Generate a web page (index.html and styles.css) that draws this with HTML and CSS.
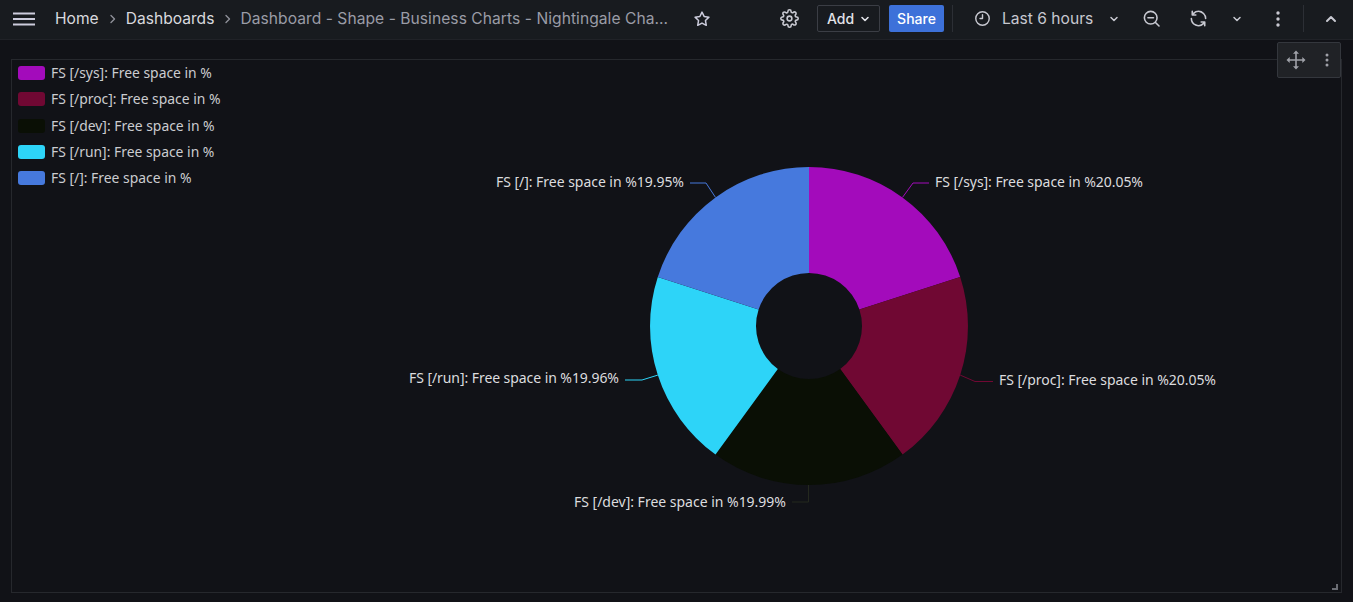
FILE: index.html
```html
<!DOCTYPE html>
<html lang="en">
<head>
<meta charset="utf-8">
<title>Dashboard - Shape - Business Charts - Nightingale Chart</title>
<link rel="stylesheet" href="styles.css">
</head>
<body>
<header class="topbar">
  <button class="btn-icon menu-btn" aria-label="Open menu">
    <svg width="22" height="14" viewBox="0 0 22 14"><path d="M0 1.5h22M0 7h22M0 12.5h22" stroke="currentColor" stroke-width="2"/></svg>
  </button>
  <nav class="crumbs">
    <a class="crumb">Home</a>
    <svg class="sep" width="6" height="10" viewBox="0 0 6 10"><path d="M1 1.5l3.5 3.5L1 8.5" fill="none" stroke="currentColor" stroke-width="1.4" stroke-linecap="round" stroke-linejoin="round"/></svg>
    <a class="crumb">Dashboards</a>
    <svg class="sep" width="6" height="10" viewBox="0 0 6 10"><path d="M1 1.5l3.5 3.5L1 8.5" fill="none" stroke="currentColor" stroke-width="1.4" stroke-linecap="round" stroke-linejoin="round"/></svg>
    <span class="crumb current">Dashboard - Shape - Business Charts - Nightingale Cha...</span>
  </nav>
  <button class="btn-icon star-btn" aria-label="Mark as favorite">
    <svg width="18" height="18" viewBox="0 0 24 24"><path d="M12 2.8l2.85 5.8 6.4.93-4.63 4.5 1.1 6.370L12 17.4l-5.72 3.02 1.1-6.37-4.63-4.5 6.4-.93z" fill="none" stroke="currentColor" stroke-width="2" stroke-linejoin="round"/></svg>
  </button>

  <div class="actions">
    <button class="btn-icon gear-btn" aria-label="Settings">
      <svg width="19" height="19" viewBox="0 0 24 24" fill="none" stroke="currentColor" stroke-width="2" stroke-linecap="round" stroke-linejoin="round"><circle cx="12" cy="12" r="3"/><path d="M19.4 15a1.65 1.65 0 0 0 .33 1.82l.06.06a2 2 0 0 1 0 2.83 2 2 0 0 1-2.83 0l-.06-.06a1.65 1.65 0 0 0-1.82-.33 1.65 1.65 0 0 0-1 1.51V21a2 2 0 0 1-2 2 2 2 0 0 1-2-2v-.09A1.65 1.65 0 0 0 9 19.4a1.65 1.65 0 0 0-1.82.33l-.06.06a2 2 0 0 1-2.83 0 2 2 0 0 1 0-2.83l.06-.06a1.65 1.65 0 0 0 .33-1.82 1.65 1.65 0 0 0-1.51-1H3a2 2 0 0 1-2-2 2 2 0 0 1 2-2h.09A1.65 1.65 0 0 0 4.6 9a1.65 1.65 0 0 0-.33-1.82l-.06-.06a2 2 0 0 1 0-2.83 2 2 0 0 1 2.83 0l.06.06a1.65 1.65 0 0 0 1.82.33H9a1.65 1.65 0 0 0 1-1.51V3a2 2 0 0 1 2-2 2 2 0 0 1 2 2v.09a1.65 1.65 0 0 0 1 1.51 1.65 1.65 0 0 0 1.82-.33l.06-.06a2 2 0 0 1 2.83 0 2 2 0 0 1 0 2.83l-.06.06a1.65 1.65 0 0 0-.33 1.82V9a1.65 1.65 0 0 0 1.51 1H21a2 2 0 0 1 2 2 2 2 0 0 1-2 2h-.09a1.65 1.65 0 0 0-1.51 1z"/></svg>
    </button>
    <button class="btn-outline add-btn">Add
      <svg width="10" height="10" viewBox="0 0 10 10"><path d="M2 3.5l3 3 3-3" fill="none" stroke="currentColor" stroke-width="1.6" stroke-linecap="round" stroke-linejoin="round"/></svg>
    </button>
    <button class="btn-primary share-btn">Share</button>
    <span class="divider"></span>
    <button class="time-btn">
      <svg width="17" height="17" viewBox="0 0 24 24" fill="none" stroke="currentColor" stroke-width="2" stroke-linecap="round" stroke-linejoin="round"><circle cx="12" cy="12" r="9.5"/><path d="M12 6.5V12H8.5"/></svg>
      <span class="time-label">Last 6 hours</span>
      <svg class="time-chev" width="10" height="10" viewBox="0 0 10 10"><path d="M2 3.5l3 3 3-3" fill="none" stroke="currentColor" stroke-width="1.5" stroke-linecap="round" stroke-linejoin="round"/></svg>
    </button>
    <button class="btn-icon zoom-btn" aria-label="Zoom out time range">
      <svg width="19" height="19" viewBox="0 0 24 24" fill="none" stroke="currentColor" stroke-width="2" stroke-linecap="round"><circle cx="11" cy="11" r="8"/><path d="M7.5 11h7M17 17l4.5 4.5"/></svg>
    </button>
    <button class="btn-icon sync-btn" aria-label="Refresh">
      <svg width="19" height="19" viewBox="0 0 24 24"><path fill="currentColor" d="M19.91,15.51H15.38a1,1,0,0,0,0,2h2.4A8,8,0,0,1,4,12a1,1,0,0,0-2,0,10,10,0,0,0,16.88,7.23V21a1,1,0,0,0,2,0V16.5A1,1,0,0,0,19.91,15.51ZM12,2A10,10,0,0,0,5.12,4.77V3a1,1,0,0,0-2,0V7.5a1,1,0,0,0,1,1h4.5a1,1,0,0,0,0-2H6.22A8,8,0,0,1,20,12a1,1,0,0,0,2,0A10,10,0,0,0,12,2Z"/></svg>
    </button>
    <button class="btn-icon chev-btn" aria-label="Auto refresh">
      <svg width="10" height="10" viewBox="0 0 10 10"><path d="M2 3.5l3 3 3-3" fill="none" stroke="currentColor" stroke-width="1.5" stroke-linecap="round" stroke-linejoin="round"/></svg>
    </button>
    <button class="btn-icon dots-btn" aria-label="More">
      <svg width="4" height="16" viewBox="0 0 4 16"><circle cx="2" cy="2" r="1.7" fill="currentColor"/><circle cx="2" cy="8" r="1.7" fill="currentColor"/><circle cx="2" cy="14" r="1.7" fill="currentColor"/></svg>
    </button>
    <span class="divider divider-2"></span>
    <button class="btn-icon up-btn" aria-label="Collapse">
      <svg width="12" height="12" viewBox="0 0 12 12"><path d="M2 8l4-4 4 4" fill="none" stroke="currentColor" stroke-width="2" stroke-linecap="round" stroke-linejoin="round"/></svg>
    </button>
  </div>
</header>

<main class="canvas">
  <section class="panel">
    <div class="panel-hover">
      <svg class="move-icon" width="20" height="20" viewBox="0 0 20 20"><path d="M10 3v14M3 10h14" stroke="currentColor" stroke-width="1.6"/><path d="M10 0.5l3 3.2H7zM10 19.5l3-3.2H7zM0.5 10l3.2-3v6zM19.5 10l-3.2-3v6z" fill="currentColor"/></svg>
      <svg class="hover-dots" width="4" height="14" viewBox="0 0 4 14"><circle cx="2" cy="2" r="1.5" fill="currentColor"/><circle cx="2" cy="7" r="1.5" fill="currentColor"/><circle cx="2" cy="12" r="1.5" fill="currentColor"/></svg>
    </div>

    <ul class="legend">
      <li class="legend-item"><span class="swatch sw-sys"></span>FS [/sys]: Free space in %</li>
      <li class="legend-item"><span class="swatch sw-proc"></span>FS [/proc]: Free space in %</li>
      <li class="legend-item"><span class="swatch sw-dev"></span>FS [/dev]: Free space in %</li>
      <li class="legend-item"><span class="swatch sw-run"></span>FS [/run]: Free space in %</li>
      <li class="legend-item"><span class="swatch sw-root"></span>FS [/]: Free space in %</li>
    </ul>

    <svg class="chart" viewBox="12 60 1329 532" preserveAspectRatio="none">
      <path class="slice sl-sys" d="M809 167 A159 159 0 0 1 960.2 276.9 L859.4 309.6 A53 53 0 0 0 809 273 Z"/>
      <path class="slice sl-proc" d="M960.2 276.9 A159 159 0 0 1 902.5 454.6 L840.2 368.9 A53 53 0 0 0 859.4 309.6 Z"/>
      <path class="slice sl-dev" d="M902.5 454.6 A159 159 0 0 1 715.5 454.6 L777.8 368.9 A53 53 0 0 0 840.2 368.9 Z"/>
      <path class="slice sl-run" d="M715.5 454.6 A159 159 0 0 1 657.8 276.9 L758.6 309.6 A53 53 0 0 0 777.8 368.9 Z"/>
      <path class="slice sl-root" d="M657.8 276.9 A159 159 0 0 1 809 167 L809 273 A53 53 0 0 0 758.6 309.6 Z"/>

      <polyline class="guide gl-sys" points="902.5,197.4 913,183 929,183"/>
      <polyline class="guide gl-proc" points="960.2,375.1 975,381.5 993,381.5"/>
      <polyline class="guide gl-dev" points="808.5,485 808.5,502 792,502"/>
      <polyline class="guide gl-run" points="657.8,375.1 642,380 625,380"/>
      <polyline class="guide gl-root" points="715.5,197.4 706,183 690,183"/>

      <text class="label" x="935" y="187" textLength="208">FS [/sys]: Free space in %20.05%</text>
      <text class="label" x="999" y="385" textLength="217">FS [/proc]: Free space in %20.05%</text>
      <text class="label end" x="786" y="506.5" textLength="212">FS [/dev]: Free space in %19.99%</text>
      <text class="label end" x="619" y="383" textLength="210">FS [/run]: Free space in %19.96%</text>
      <text class="label end" x="684" y="187" textLength="188">FS [/]: Free space in %19.95%</text>
    </svg>

    <span class="resize-handle"></span>
  </section>
</main>
</body>
</html>
```

FILE: styles.css
```css
* { box-sizing: border-box; }

html, body {
  margin: 0;
  padding: 0;
  background: #111217;
  width: 1353px;
  height: 602px;
  overflow: hidden;
  font-family: Inter, "Noto Sans", "Liberation Sans", sans-serif;
  color: #ccccdc;
}

button {
  font-family: inherit;
  background: none;
  border: none;
  padding: 0;
  margin: 0;
  color: #ccccdc;
  cursor: pointer;
}

/* ---------- top bar ---------- */
.topbar {
  height: 40px;
  background: #181b1f;
  border-bottom: 1px solid #202227;
  display: flex;
  align-items: center;
  padding: 0 10px 2px 13px;
}

.btn-icon {
  display: flex;
  align-items: center;
  justify-content: center;
  height: 32px;
}

.menu-btn {
  width: 22px;
  color: #ccccdc;
}

.crumbs {
  display: flex;
  align-items: center;
  margin-left: 20px;
  font-size: 15.6px;
  white-space: nowrap;
}

.crumb {
  color: #d8d9de;
  text-decoration: none;
}

.crumb.current {
  color: #9a9ca6;
  margin-left: -1px;
  letter-spacing: 0.05px;
}

.sep {
  color: #8e9099;
  margin: 0 10px 0 11px;
  flex: none;
}

.star-btn {
  width: 18px;
  margin-left: 25px;
  color: #ccccdc;
}

.actions {
  margin-left: auto;
  display: flex;
  align-items: center;
}

.gear-btn { width: 32px; color: #c8c9d1; }

.btn-outline {
  display: flex;
  align-items: center;
  height: 27px;
  border: 1px solid #3b3e45;
  border-radius: 2px;
  font-size: 14px;
  font-weight: 500;
  color: #e2e3e8;
}

.add-btn {
  width: 63px;
  margin-left: 12px;
  padding-left: 9px;
  gap: 6px;
}

.btn-primary {
  height: 27px;
  background: #3d71d9;
  border-radius: 2px;
  color: #ffffff;
  font-size: 14px;
  font-weight: 500;
}

.share-btn {
  width: 55px;
  margin-left: 9px;
}

.divider {
  display: block;
  width: 1px;
  height: 27px;
  background: #2c2f35;
  margin-left: 8px;
}

.time-btn {
  width: 161px;
  height: 32px;
  margin-left: 13px;
  padding: 0 8px;
  display: flex;
  align-items: center;
  color: #c8c9d1;
}

.time-label {
  margin-left: 11px;
  font-size: 15.6px;
  color: #c6c7cf;
}

.time-chev { margin-left: auto; }

.zoom-btn { width: 32px; margin-left: 8px; color: #c8c9d1; }
.sync-btn { width: 32px; margin-left: 15px; color: #c8c9d1; }
.chev-btn { width: 24px; margin-left: 11px; color: #c8c9d1; }
.dots-btn { width: 32px; margin-left: 13px; color: #c8c9d1; }
.divider-2 { margin-left: 9px; }
.up-btn { width: 24px; margin-left: 15px; color: #c8c9d1; }

/* ---------- canvas / panel ---------- */
.canvas {
  padding: 19px 11px 9px 11px;
  height: 562px;
}

.panel {
  position: relative;
  height: 534px;
  border: 1px solid #26282d;
  background: #111217;
}

.panel-hover {
  position: absolute;
  top: -18px;
  right: 0;
  width: 64px;
  height: 36px;
  background: #202226;
  border: 1px solid #34373d;
  border-radius: 2px;
  display: flex;
  align-items: center;
  padding-left: 8px;
  color: #9fa1a8;
  z-index: 2;
}

.hover-dots { margin-left: 19px; }

.legend {
  position: absolute;
  top: 6px;
  left: 6px;
  margin: 0;
  padding: 0;
  list-style: none;
  display: flex;
  flex-direction: column;
  gap: 12.3px;
  font-family: "Noto Sans", "Open Sans", sans-serif;
  font-size: 13.9px;
  color: #cbccd0;
  z-index: 1;
}

.legend-item {
  display: flex;
  align-items: center;
  height: 14px;
  line-height: 14px;
  white-space: nowrap;
}

.swatch {
  width: 27px;
  height: 14px;
  border-radius: 3px;
  margin-right: 6px;
  flex: none;
}

.sw-sys  { background: #a30bbb; }
.sw-proc { background: #700833; }
.sw-dev  { background: #0a0f05; }
.sw-run  { background: #2dd4f8; }
.sw-root { background: #4679dd; }

.chart {
  display: block;
  width: 100%;
  height: 100%;
}

.slice.sl-sys  { fill: #a30bbb; }
.slice.sl-proc { fill: #700833; }
.slice.sl-dev  { fill: #0a0f05; }
.slice.sl-run  { fill: #2dd4f8; }
.slice.sl-root { fill: #4679dd; }

.guide { fill: none; stroke-width: 1; }
.gl-sys  { stroke: #a30bbb; }
.gl-proc { stroke: #700833; }
.gl-dev  { stroke: #24281e; }
.gl-run  { stroke: #2dd4f8; }
.gl-root { stroke: #4679dd; }

.label {
  font-family: "Noto Sans", "Open Sans", sans-serif;
  font-size: 14px;
  fill: #dcdcdf;
}

.label.end { text-anchor: end; }

.resize-handle {
  position: absolute;
  right: 3px;
  bottom: 2px;
  width: 6px;
  height: 6px;
  border-right: 2px solid #6b6d74;
  border-bottom: 2px solid #6b6d74;
}
```
